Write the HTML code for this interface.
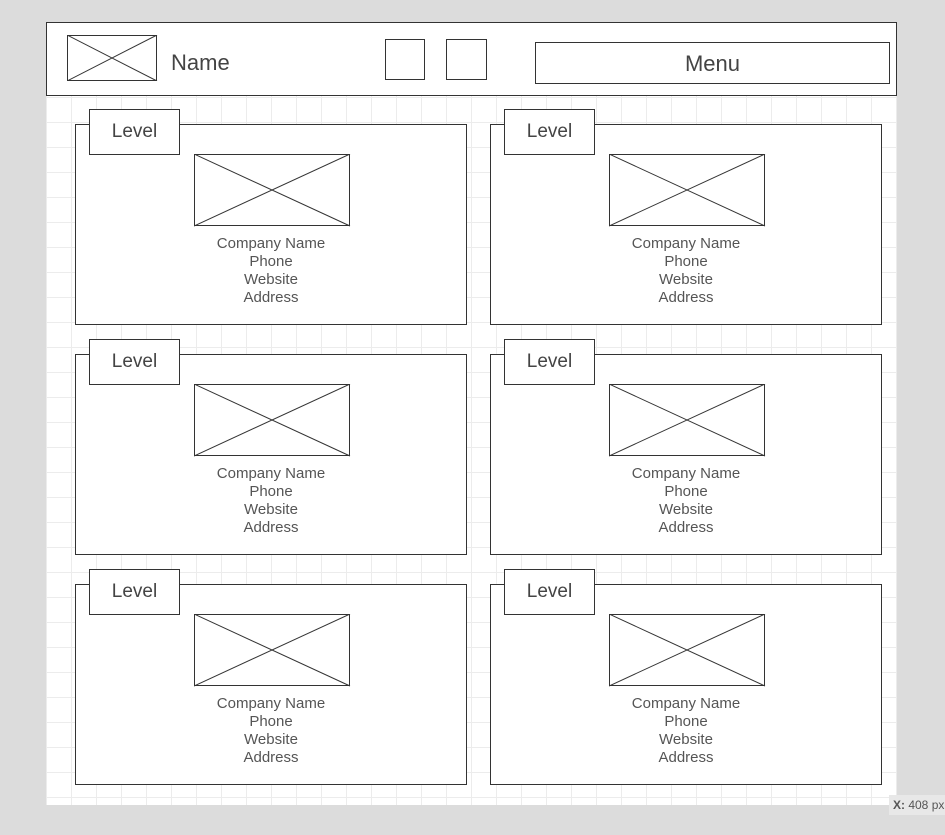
<!DOCTYPE html><html><head><style>
body{margin:0;width:945px;height:835px;background:#dcdcdc;position:relative;overflow:hidden;font-family:"Liberation Sans",sans-serif;color:#444}
.canvas{position:absolute;left:46px;top:22px;width:851px;height:783px;background-color:#fff;
background-image:linear-gradient(#ececec 1px,transparent 1px),linear-gradient(90deg,#ececec 1px,transparent 1px);background-size:25px 25px;background-position:25px 0px}
.b{position:absolute;border:1px solid #333;background:#fff;box-sizing:border-box}
.x{position:absolute}
.t{position:absolute;text-align:center;font-size:15px;color:#555;line-height:18px}
</style></head><body>
<div class="canvas"></div>
<div class="b" style="left:46px;top:22px;width:851px;height:74px"></div>
<svg class="x" style="left:67px;top:35px" width="91" height="46"><rect x=".5" y=".5" width="89" height="45" fill="#fff" stroke="#333"/><path d="M0 0L90 46M0 46L90 0" stroke="#333"/></svg>
<div class="x" style="left:171px;top:50px;font-size:22px;color:#444">Name</div>
<div class="b" style="left:385px;top:39px;width:40px;height:41px"></div>
<div class="b" style="left:446px;top:39px;width:41px;height:41px"></div>
<div class="b" style="left:535px;top:42px;width:355px;height:42px;text-align:center;font-size:22px;line-height:42px;color:#444">Menu</div>
<div id="c"></div>
<script>
var h='';[0,230,460].forEach(function(dy){[0,415].forEach(function(dx){
h+='<div class="b" style="left:'+(75+dx)+'px;top:'+(124+dy)+'px;width:392px;height:201px"></div>';
h+='<div class="b" style="left:'+(89+dx)+'px;top:'+(109+dy)+'px;width:91px;height:46px;text-align:center;line-height:44px;font-size:19px;color:#444">Level</div>';
h+='<svg class="x" style="left:'+(194+dx)+'px;top:'+(154+dy)+'px" width="157" height="73"><rect x=".5" y=".5" width="155" height="71" fill="#fff" stroke="#333"/><path d="M0 0L156 72M0 72L156 0" stroke="#333"/></svg>';
h+='<div class="t" style="left:'+(171+dx)+'px;top:'+(235+dy)+'px;width:200px">Company Name<br>Phone<br>Website<br>Address</div>';
})});document.getElementById('c').innerHTML=h;
</script>
<div class="x" style="left:889px;top:795px;width:60px;height:20px;background:#e8e8e8;font-size:12px;line-height:20px;color:#555;padding-left:4px"><b>X:</b> 408 px</div>
</body></html>
